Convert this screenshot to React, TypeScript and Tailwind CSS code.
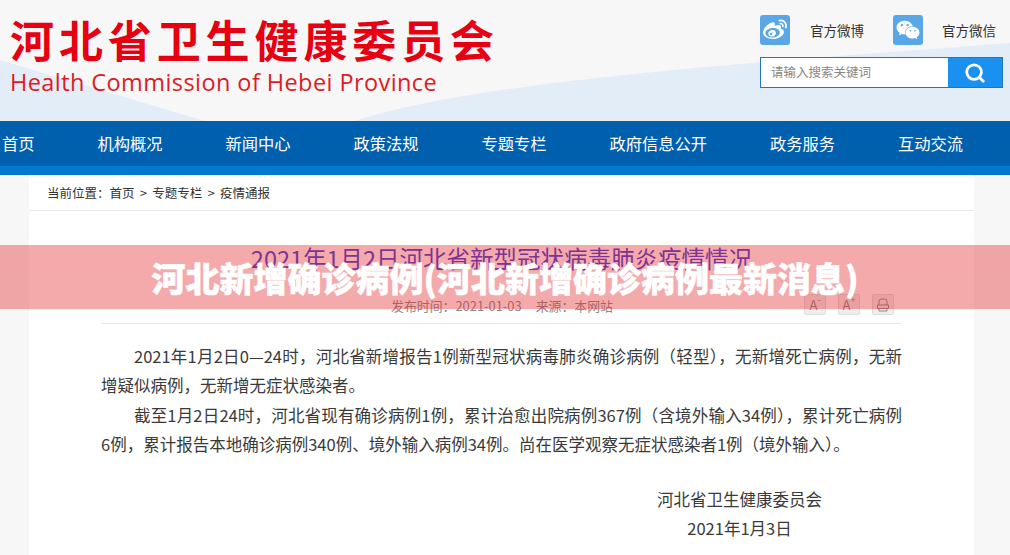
import { Search } from 'lucide-react';
import { FaWeibo, FaWeixin } from 'react-icons/fa';

const navItems = ['首页', '机构概况', '新闻中心', '政策法规', '专题专栏', '政府信息公开', '政务服务', '互动交流'];

export default function App() {
    return (
        <div className="relative h-[555px] w-[1010px] overflow-hidden bg-[#f7f7f7] font-['Noto_Sans_CJK_SC',sans-serif] text-[#333]">
            {/* Header with logo, social links and search */}
            <header className="relative flex h-[121px] justify-between overflow-hidden bg-[#f7f7f7]">
                <svg className="absolute inset-0" width="1010" height="121" viewBox="0 0 1010 121">
                    <path d="M0 60 L205 121 L0 121 Z" fill="#e3edf7" />
                    <path d="M355 121 C 480 80, 760 62, 1010 43 L1010 121 Z" fill="#e3edf7" />
                </svg>
                <div className="relative pl-[10px] pt-[11px]">
                    <div className="text-[44px] leading-[56px] font-bold tracking-[4.9px] whitespace-nowrap text-[#e60012]">河北省卫生健康委员会</div>
                    <div className="mt-[1px] font-['Open_Sans',sans-serif] text-[23.5px] leading-[28px] tracking-[0.42px] whitespace-nowrap text-[#dc1c24]">Health Commission of Hebei Province</div>
                </div>
                <div className="relative w-[250px] pt-[15px]">
                    <div className="flex items-center">
                        <div className="flex h-[30px] w-[30px] items-center justify-center rounded-[3px] bg-[#5aa7e8]">
                            <FaWeibo className="text-[24px] text-white" />
                        </div>
                        <span className="ml-[20px] text-[13.5px] text-[#333]">官方微博</span>
                        <div className="ml-[29px] flex h-[30px] w-[30px] items-center justify-center rounded-[3px] bg-[#5aa7e8]">
                            <FaWeixin className="text-[24px] text-white" />
                        </div>
                        <span className="ml-[19px] text-[13.5px] text-[#333]">官方微信</span>
                    </div>
                    <div className="mt-[12px] flex h-[31px] w-[243px] border border-[#1f78b8] bg-white">
                        <div className="flex-1 pl-[10px] text-[12.5px] leading-[27px] text-[#888]">请输入搜索关键词</div>
                        <div className="flex w-[54px] items-center justify-center bg-[#1a90f0]">
                            <Search className="h-[22px] w-[22px] text-white" strokeWidth={3} />
                        </div>
                    </div>
                </div>
            </header>

            {/* Main navigation */}
            <nav className="flex h-[45px] items-center gap-[63px] bg-[#0060ae] pl-[2px] text-[16.25px] whitespace-nowrap text-white">
                {navItems.map((item) => (
                    <span key={item}>{item}</span>
                ))}
            </nav>
            <div className="h-[9px] bg-[#0079cf]" />

            {/* Article */}
            <main className="mx-[29px] h-[380px] w-[945px] bg-white">
                <div className="h-[36px] border-b border-[#e8e8e8] pl-[18px] text-[12.5px] leading-[35px] text-[#333] [word-spacing:2.6px]">当前位置：首页 &gt; 专题专栏 &gt; 疫情通报</div>
                <div className="px-[72px]">
                    <h1 className="mt-[31px] text-center text-[23.5px] leading-[32px] font-normal text-[#3c3ad8]">2021年1月2日河北省新型冠状病毒肺炎疫情情况</h1>
                    <div className="mt-[4px] flex h-[46px] items-end border-b border-[#e8e8e8] pb-[7px]">
                        <div className="ml-[290px] text-[12.9px] leading-[20px] text-[#888]">
                            发布时间：2021-01-03<span className="ml-[14px]">来源：本网站</span>
                        </div>
                        <div className="ml-auto mr-[8px] mb-[1px] flex gap-[12px]">
                            <div className="flex h-[21px] w-[22px] items-center justify-center rounded-[2px] border border-[#ddd] bg-[#eee] text-[13px] text-[#888]">
                                A<sup className="text-[9px]">-</sup>
                            </div>
                            <div className="flex h-[21px] w-[22px] items-center justify-center rounded-[2px] border border-[#ddd] bg-[#eee] text-[13px] text-[#888]">
                                A<sup className="text-[9px]">+</sup>
                            </div>
                            <div className="flex h-[21px] w-[22px] items-center justify-center rounded-[2px] border border-[#ddd] bg-[#eee]">
                                <svg width="14" height="14" viewBox="0 0 14 14" fill="none" stroke="#888" strokeWidth="1">
                                    <path d="M3 7V3.5A2.5 2.5 0 0 1 5.5 1h3A2.5 2.5 0 0 1 11 3.5V7" />
                                    <path d="M1.5 7h11v3.5h-11z" />
                                    <path d="M3 10.5v2.5h8v-2.5" />
                                </svg>
                            </div>
                        </div>
                    </div>
                    <div className="mt-[18px] text-justify text-[16.5px] leading-[29.3px] text-[#3a3a3a]">
                        <p className="indent-[33px]">2021年1月2日0—24时，河北省新增报告1例新型冠状病毒肺炎确诊病例（轻型），无新增死亡病例，无新增疑似病例，无新增无症状感染者。</p>
                        <p className="indent-[33px]">截至1月2日24时，河北省现有确诊病例1例，累计治愈出院病例367例（含境外输入34例），累计死亡病例6例，累计报告本地确诊病例340例、境外输入病例34例。尚在医学观察无症状感染者1例（境外输入）。</p>
                        <div className="mt-[26px] ml-[533px] w-[211px] text-center">
                            <p>河北省卫生健康委员会</p>
                            <p>2021年1月3日</p>
                        </div>
                    </div>
                </div>
            </main>

            {/* Translucent headline banner */}
            <div className="absolute top-[245px] left-0 flex h-[64px] w-full items-center justify-center bg-[#e32a2c]/40">
                <span className="pt-[2px] text-[34px] leading-[70px] font-black whitespace-nowrap text-white [-webkit-text-stroke:0.5px_white]">河北新增确诊病例(河北新增确诊病例最新消息)</span>
            </div>
        </div>
    );
}
